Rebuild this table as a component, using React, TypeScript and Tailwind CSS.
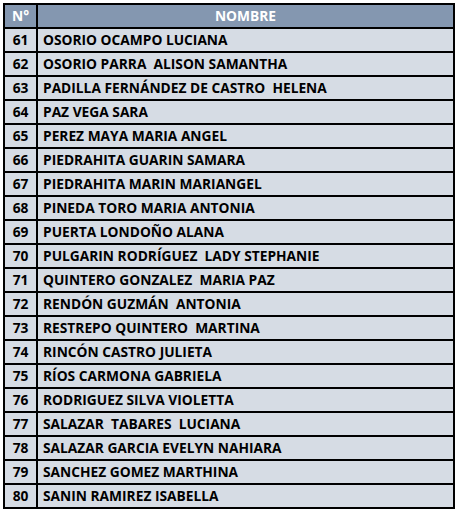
import { Fragment } from "react";

const students: [number, string][] = [
  [61, "OSORIO OCAMPO LUCIANA"],
  [62, "OSORIO PARRA  ALISON SAMANTHA"],
  [63, "PADILLA FERNÁNDEZ DE CASTRO  HELENA"],
  [64, "PAZ VEGA SARA"],
  [65, "PEREZ MAYA MARIA ANGEL"],
  [66, "PIEDRAHITA GUARIN SAMARA"],
  [67, "PIEDRAHITA MARIN MARIANGEL"],
  [68, "PINEDA TORO MARIA ANTONIA"],
  [69, "PUERTA LONDOÑO ALANA"],
  [70, "PULGARIN RODRÍGUEZ  LADY STEPHANIE"],
  [71, "QUINTERO GONZALEZ  MARIA PAZ"],
  [72, "RENDÓN GUZMÁN  ANTONIA"],
  [73, "RESTREPO QUINTERO  MARTINA"],
  [74, "RINCÓN CASTRO JULIETA"],
  [75, "RÍOS CARMONA GABRIELA"],
  [76, "RODRIGUEZ SILVA VIOLETTA"],
  [77, "SALAZAR  TABARES  LUCIANA"],
  [78, "SALAZAR GARCIA EVELYN NAHIARA"],
  [79, "SANCHEZ GOMEZ MARTHINA"],
  [80, "SANIN RAMIREZ ISABELLA"],
];

export default function App() {
  return (
    <div className="bg-white w-[457px] h-[512px] pt-[3px] pl-[3px] font-['Open_Sans','Liberation_Sans',sans-serif] font-bold text-[13.75px]">
      <div className="w-[452px] grid grid-cols-[31px_1fr] gap-[2px] p-[2px] bg-black">
        {/* header */}
        <div className="h-[22px] bg-[#8497b0] text-white flex items-center justify-center">N°</div>
        <div className="h-[22px] bg-[#8497b0] text-white flex items-center justify-center">NOMBRE</div>

        {/* rows */}
        {students.map(([n, name]) => (
          <Fragment key={n}>
            <div className="h-[22px] bg-[#d6dce4] text-black flex items-center justify-center pt-[1px]">{n}</div>
            <div className="h-[22px] bg-[#d6dce4] text-black flex items-center pl-[5px] pt-[1px] whitespace-pre">
              {name}
            </div>
          </Fragment>
        ))}
      </div>
    </div>
  );
}
